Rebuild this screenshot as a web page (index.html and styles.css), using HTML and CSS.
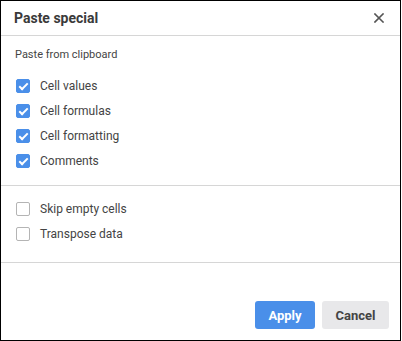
FILE: index.html
```html
<!DOCTYPE html>
<html lang="en">
<head>
    <meta charset="UTF-8">
    <meta name="viewport" content="width=device-width, initial-scale=1.0">
    <title>Paste special</title>
    <link rel="stylesheet" href="styles.css">
</head>
<body>
    <div class="dialog">
        <div class="dialog-header">
            <span class="dialog-title">Paste special</span>
            <span class="close-btn">
                <svg width="10" height="10" viewBox="0 0 10 10">
                    <path d="M1 1 L9 9 M9 1 L1 9" stroke="#555" stroke-width="1.6" stroke-linecap="square"/>
                </svg>
            </span>
        </div>

        <!-- Clipboard options -->
        <div class="section section-main">
            <div class="section-label">Paste from clipboard</div>
            <label class="option"><span class="check checked"></span>Cell values</label>
            <label class="option"><span class="check checked"></span>Cell formulas</label>
            <label class="option"><span class="check checked"></span>Cell formatting</label>
            <label class="option"><span class="check checked"></span>Comments</label>
        </div>

        <!-- Extra options -->
        <div class="section section-extra">
            <label class="option"><span class="check"></span>Skip empty cells</label>
            <label class="option"><span class="check"></span>Transpose data</label>
        </div>

        <div class="dialog-footer">
            <button class="btn btn-primary">Apply</button>
            <button class="btn btn-secondary">Cancel</button>
        </div>
    </div>
</body>
</html>
```

FILE: styles.css
```css
body {
    margin: 0;
    font-family: Roboto, 'Liberation Sans', Arial, sans-serif;
    background: #fff;
    color: #333;
}

.dialog {
    box-sizing: border-box;
    width: 401px;
    height: 341px;
    border: 1px solid #000;
    background: #fff;
    display: flex;
    flex-direction: column;
}

.dialog-header {
    height: 34px;
    border-bottom: 1px solid #d6d6d6;
    display: flex;
    align-items: center;
    justify-content: space-between;
    padding: 0 16px 0 13px;
}

.dialog-title {
    font-size: 14px;
    font-weight: 700;
    color: #3a3a3a;
}

.close-btn {
    display: flex;
    align-items: center;
    cursor: pointer;
}

.section {
    border-bottom: 1px solid #d6d6d6;
    padding: 0 15px;
}

.section-main {
    padding-top: 12px;
    padding-bottom: 12px;
}

.section-extra {
    padding-top: 10px;
    padding-bottom: 16px;
}

.section-label {
    font-size: 11px;
    line-height: 14px;
    color: #444;
    margin-left: -1px;
    margin-bottom: 11px;
}

.option {
    height: 25px;
    display: flex;
    align-items: center;
    font-size: 12px;
    color: #444;
    cursor: pointer;
}

.check {
    box-sizing: border-box;
    width: 14px;
    height: 14px;
    border: 1px solid #b4b4b4;
    border-radius: 2px;
    margin-right: 10px;
    position: relative;
    flex-shrink: 0;
}

.check.checked {
    background: #4a8fe9;
    border-color: #4a8fe9;
}

.check.checked::after {
    content: '';
    position: absolute;
    left: 3.5px;
    top: 1px;
    width: 3px;
    height: 7px;
    border-right: 2px solid #fff;
    border-bottom: 2px solid #fff;
    transform: rotate(45deg);
}

.dialog-footer {
    flex: 1;
    display: flex;
    justify-content: flex-end;
    align-items: flex-end;
    gap: 7px;
    padding: 0 11px 11px 0;
}

.btn {
    height: 28px;
    border: none;
    border-radius: 3px;
    font-family: Roboto, 'Liberation Sans', Arial, sans-serif;
    font-size: 13px;
    font-weight: 700;
    cursor: pointer;
}

.btn-primary {
    width: 60px;
    background: #4a8fe9;
    color: #fff;
}

.btn-secondary {
    width: 67px;
    background: #e8e8ea;
    color: #444;
}
```
